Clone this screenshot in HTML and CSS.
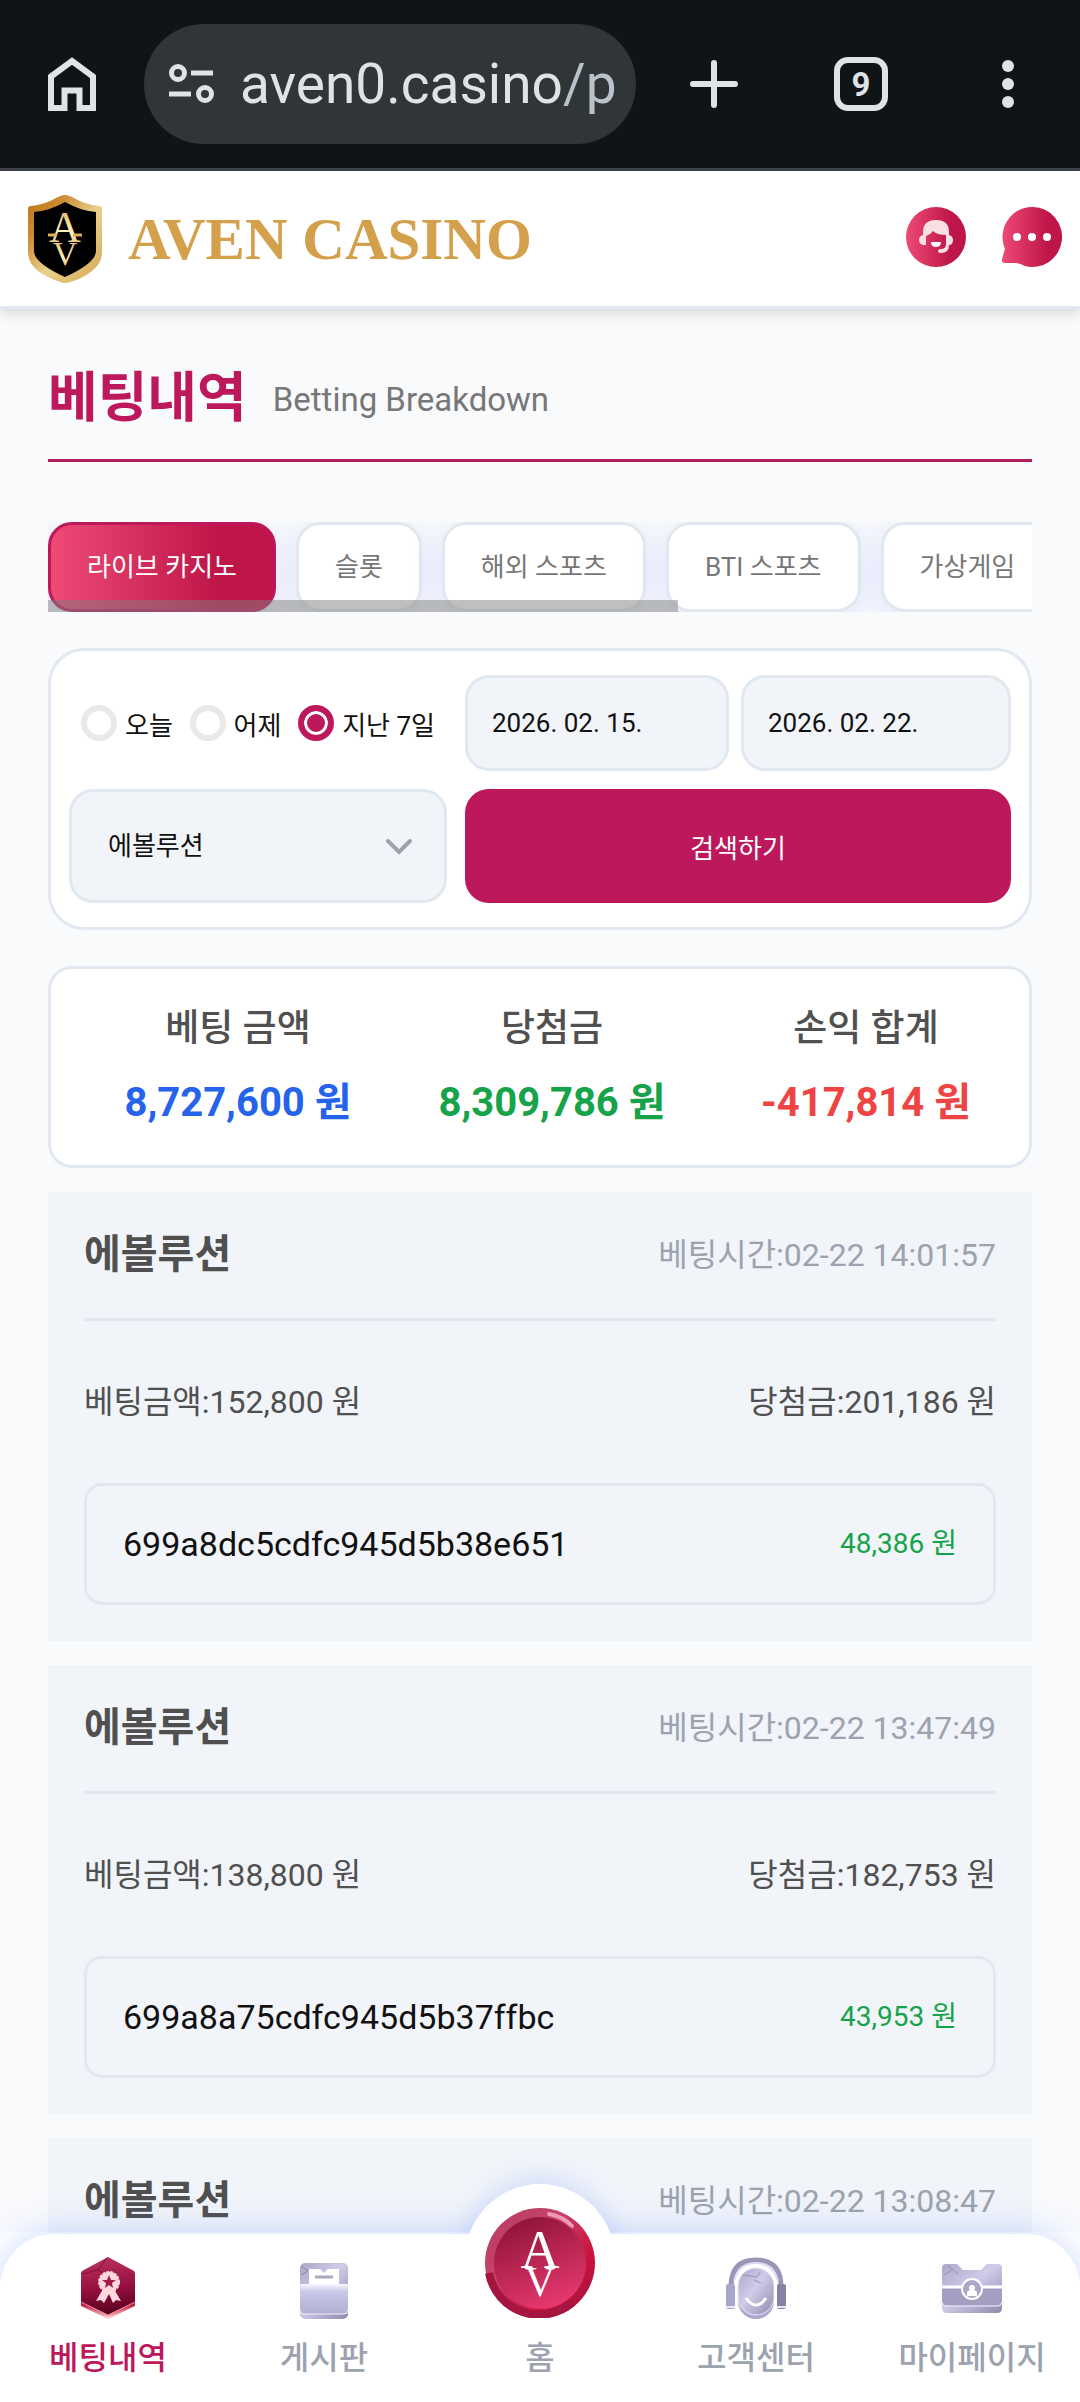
FILE: index.html
```html
<!DOCTYPE html>
<html lang="ko">
<head>
<meta charset="utf-8">
<meta name="viewport" content="width=device-width, initial-scale=1">
<title>베팅내역 - AVEN CASINO</title>
<link rel="stylesheet" href="styles.css">
</head>
<body>
<div class="app">
  <div class="browser">
    <button class="browser-btn" aria-label="Home">
      <svg width="48" height="54" viewBox="0 0 48 54"><path d="M3 19.500 24 4l21 15.500V51H31.500V33.500h-15V51H3z" fill="none" stroke="#dfe2e6" stroke-width="6"/></svg>
    </button>
    <div class="address">
      <svg width="48" height="42" viewBox="0 0 48 42" fill="none" stroke="#dfe2e6" stroke-width="5"><circle cx="10" cy="10" r="6.500"/><path d="M23 10h22M1 31h22"/><circle cx="37" cy="31" r="6.500"/></svg>
      <span class="url">aven0.casino<span class="url-path">/p</span></span>
    </div>
    <div class="browser-actions">
      <button class="browser-btn" aria-label="New tab">
        <svg width="48" height="48" viewBox="0 0 48 48"><path d="M24 3v42M3 24h42" stroke="#dfe2e6" stroke-width="6" stroke-linecap="round"/></svg>
      </button>
      <button class="browser-btn tab-count" aria-label="Tabs">9</button>
      <button class="browser-btn" aria-label="Menu">
        <svg width="48" height="54" viewBox="0 0 48 54" fill="#dfe2e6"><circle cx="24" cy="9" r="6"/><circle cx="24" cy="27" r="6"/><circle cx="24" cy="45" r="6"/></svg>
      </button>
    </div>
  </div>

  <header class="site-header">
    <a class="brand" href="#">
      <svg width="74" height="88" viewBox="0 0 74 88">
        <defs>
          <linearGradient id="gold" x1="0" y1="0" x2="1" y2="1"><stop offset="0" stop-color="#bd7316"/><stop offset=".25" stop-color="#cc8b31"/><stop offset=".55" stop-color="#ead08c"/><stop offset="1" stop-color="#d5a650"/></linearGradient>
          <linearGradient id="goldText" x1="0" y1="0" x2="0" y2="1"><stop offset="0" stop-color="#d9a553"/><stop offset=".6" stop-color="#fff3bf"/><stop offset="1" stop-color="#d5a550"/></linearGradient>
        </defs>
        <path d="M37 0q3 0 7 2 14 8 27 9 3 0 3 3v43q0 11-10 19-10 8-22 11-5 2-10 0Q20 83 10 76 0 68 0 57V14q0-3 3-3 13-1 27-9 4-2 7-2z" fill="url(#gold)"/>
        <path d="M37 7q16 9 31 10v39q0 12-31 26Q6 68 6 56V17q15-1 31-10z" fill="#000"/>
        <g class="emblem" fill="url(#goldText)"><text class="emblem-a" x="37" y="47">A</text><text class="emblem-v" x="37" y="70">V</text></g>
        <path d="M20 40h9M45 40h9" stroke="#dcae5f" stroke-width="3"/>
      </svg>
      <span class="brand-name">AVEN CASINO</span>
    </a>
    <div class="header-actions">
      <button class="round-btn" aria-label="상담원">
        <svg width="60" height="60" viewBox="0 0 60 60">
          <defs><linearGradient id="rose"><stop offset="0" stop-color="#ee4a76"/><stop offset=".75" stop-color="#be1648"/></linearGradient></defs>
          <circle cx="30" cy="30" r="30" fill="url(#rose)"/>
          <path d="M17 28V25q0-12 13-12t13 12v3q4 1 4 5 0 5-4 5 0 8-8 8-3 0-3-2t3-2q5 0 5-5V28q-9 0-13-4-3 4-7 5v9h-3q-4-1-4-5t4-5z" fill="#f7dfe4"/>
          <path d="M25 35h10q0 5-5 5t-5-5z" fill="#fff"/>
        </svg>
      </button>
      <button class="round-btn" aria-label="채팅">
        <svg width="60" height="60" viewBox="0 0 60 60">
          <path d="M31 0a29.500 30 0 1 1-8 59q-5-3-10-3H3q-4 0-3-4l3-10A29.500 30 0 0 1 31 0z" fill="url(#rose)"/>
          <g fill="#fff"><circle cx="15" cy="30" r="4"/><circle cx="30" cy="30" r="4"/><circle cx="45" cy="30" r="4"/></g>
        </svg>
      </button>
    </div>
  </header>

  <main class="content">
    <div class="page-title">
      <h1>베팅내역</h1>
      <span class="page-subtitle">Betting Breakdown</span>
    </div>

    <div class="tabs-wrap">
      <nav class="tabs">
        <button class="tab active">라이브 카지노</button>
        <button class="tab">슬롯</button>
        <button class="tab">해외 스포츠</button>
        <button class="tab">BTI 스포츠</button>
        <button class="tab">가상게임</button>
      </nav>
    </div>

    <form class="filter">
      <div class="periods">
        <label class="period"><input type="radio" name="period">오늘</label>
        <label class="period"><input type="radio" name="period">어제</label>
        <label class="period"><input type="radio" name="period" checked>지난 7일</label>
      </div>
      <div class="dates">
        <input class="field" type="text" value="2026. 02. 15." aria-label="시작일">
        <input class="field" type="text" value="2026. 02. 22." aria-label="종료일">
      </div>
      <div class="select-wrap">
        <select class="field" aria-label="게임사"><option>에볼루션</option></select>
        <svg class="chevron" width="28" height="18" viewBox="0 0 28 18"><path d="M3 3l11 11L25 3" fill="none" stroke="#9ca3af" stroke-width="4" stroke-linecap="round"/></svg>
      </div>
      <button class="search" type="button">검색하기</button>
    </form>

    <section class="summary">
      <div><p class="summary-label">베팅 금액</p><p class="summary-value blue">8,727,600 원</p></div>
      <div><p class="summary-label">당첨금</p><p class="summary-value green">8,309,786 원</p></div>
      <div><p class="summary-label">손익 합계</p><p class="summary-value red">-417,814 원</p></div>
    </section>

    <section class="bets">
      <article class="bet">
        <div class="bet-head"><h2>에볼루션</h2><time>베팅시간:02-22 14:01:57</time></div>
        <div class="bet-amounts"><span>베팅금액:152,800 원</span><span>당첨금:201,186 원</span></div>
        <div class="bet-result"><span>699a8dc5cdfc945d5b38e651</span><span class="profit">48,386 원</span></div>
      </article>
      <article class="bet">
        <div class="bet-head"><h2>에볼루션</h2><time>베팅시간:02-22 13:47:49</time></div>
        <div class="bet-amounts"><span>베팅금액:138,800 원</span><span>당첨금:182,753 원</span></div>
        <div class="bet-result"><span>699a8a75cdfc945d5b37ffbc</span><span class="profit">43,953 원</span></div>
      </article>
      <article class="bet">
        <div class="bet-head"><h2>에볼루션</h2><time>베팅시간:02-22 13:08:47</time></div>
      </article>
    </section>
  </main>

  <footer class="dock">
    <nav class="dock-nav">
      <a class="dock-item active" href="#">
        <svg width="54" height="62" viewBox="0 0 54 62">
          <defs>
            <linearGradient id="hex" x1=".3" y1="0" x2=".4" y2="1"><stop offset="0" stop-color="#b83262"/><stop offset=".5" stop-color="#9a1241"/><stop offset="1" stop-color="#58001f"/></linearGradient>
            <linearGradient id="hexEdge" x1="0" y1="0" x2="0" y2="1"><stop offset=".75" stop-color="#c01c3c"/><stop offset="1" stop-color="#ffdcdc"/></linearGradient>
          </defs>
          <path d="M27 3 54 18v31L27 62 0 49V18z" fill="url(#hexEdge)"/>
          <path d="M27 0 53 14q1 1 1 3v28L27 58 0 45V17q0-2 1-3z" fill="url(#hex)"/>
          <path d="M0 45 27 58 54 45" fill="none" stroke="#ea8b9b"/>
          <path d="M1 17l16-4 9-12M17 13l9 5" stroke="#851039" fill="none"/>
          <path d="M22 32 15 44l5-1 3 3 5-9 4 9 3-3 5 1-7-12z" fill="#ffd7df"/>
          <circle cx="28" cy="25" r="10" fill="#ffd7df" stroke="#ffd7df" stroke-width="2" stroke-dasharray="3 1"/>
          <path d="m28 18 2 5h5l-4 3 1 5-4-3-4 3 1-5-4-3h5z" fill="#a51a46"/>
        </svg>
        <span>베팅내역</span>
      </a>
      <a class="dock-item" href="#">
        <svg width="50" height="62" viewBox="0 0 50 62">
          <defs><linearGradient id="lav" x1="0" y1="0" x2="1" y2="1"><stop offset="0" stop-color="#aaa7c8"/><stop offset=".45" stop-color="#cfcce9"/><stop offset="1" stop-color="#8e89ac"/></linearGradient>
          <linearGradient id="lavDown" x1="0" y1="0" x2="0" y2="1"><stop offset="0" stop-color="#f7f7ff"/><stop offset=".25" stop-color="#cbc9e8"/><stop offset="1" stop-color="#b0aed2"/></linearGradient></defs>
          <rect x="1" y="6" width="48" height="56" rx="5" fill="url(#lav)"/>
          <path d="M10 28V12h11l4 4 4-4h11v16z" fill="#fff"/>
          <path d="M16 20h18" stroke="#aaa6c4" stroke-width="3"/>
          <path d="M1 27h48v26q0 4-4 4H5q-4 0-4-4z" fill="url(#lavDown)"/>
          <path d="M1 53q0 4 4 4h40q4 0 4-4" fill="none" stroke="#f3f1ff"/>
          <path d="M2 9l7 5-7 4" fill="none" stroke="#8986a8"/>
        </svg>
        <span>게시판</span>
      </a>
      <a class="dock-item home" href="#">
        <span class="coin">
          <svg width="110" height="110" viewBox="0 0 110 110">
            <defs>
              <linearGradient id="rim" x1="0" y1="0" x2="1" y2="1"><stop offset="0" stop-color="#b83a61"/><stop offset=".35" stop-color="#c44369"/><stop offset=".7" stop-color="#cc123f"/><stop offset="1" stop-color="#91143b"/></linearGradient>
              <linearGradient id="disc" x1=".3" y1="0" x2=".7" y2="1"><stop offset="0" stop-color="#8e1439"/><stop offset=".5" stop-color="#bd2754"/><stop offset="1" stop-color="#e83a72"/></linearGradient>
            </defs>
            <circle cx="55" cy="55" r="55" fill="url(#rim)"/>
            <path d="M4 65A51 51 0 0 0 88 94" fill="none" stroke="#a5153f" stroke-width="8"/>
            <circle cx="55" cy="55" r="46" fill="url(#disc)"/>
            <path d="M64 6q15 3 23 12" fill="none" stroke="#ed9ab2" stroke-width="4" stroke-linecap="round"/>
            <g class="coin-mark" fill="#fff"><text class="coin-a" x="55" y="60">A</text><text class="coin-v" x="55" y="88">V</text></g>
          </svg>
        </span>
        <span>홈</span>
      </a>
      <a class="dock-item" href="#">
        <svg width="60" height="62" viewBox="0 0 60 62">
          <path d="M5 30q0-27 25-27t25 27" fill="none" stroke="#9a96b8" stroke-width="5"/>
          <path d="M8 24Q13 6 30 6t22 18" fill="none" stroke="#dddaf2" stroke-width="2"/>
          <rect x="0" y="27" width="9" height="25" rx="2" fill="#a9a6cc"/><rect x="51" y="27" width="9" height="25" rx="2" fill="#8781a5"/>
          <path d="M0 50h9M51 50h9" stroke="#eae8f8" stroke-width="2"/>
          <rect x="12" y="15" width="36" height="47" rx="18" fill="#aaa6cc"/>
          <rect x="12" y="11" width="36" height="47" rx="18" fill="url(#lav)" stroke="#ebe9fa"/>
          <path d="M20 41q10 14 20 0" fill="none" stroke="#fff" stroke-width="3"/>
          <path d="M17 18l14 2 3-5M28 23l7 3" fill="none" stroke="#9692b4"/>
        </svg>
        <span>고객센터</span>
      </a>
      <a class="dock-item" href="#">
        <svg width="60" height="62" viewBox="0 0 60 62">
          <path d="M4 7h11l6 6h18l6-6h11q4 0 4 4v40q0 5-5 5H5q-5 0-5-5V11q0-4 4-4z" fill="url(#lav)"/>
          <path d="M0 30h60v15q0 4-4 4H4q-4 0-4-4z" fill="#a39fc2"/>
          <path d="M0 30h60" stroke="#fff" stroke-width="3"/>
          <path d="M0 45q0 4 4 4h52q4 0 4-4" fill="none" stroke="#f4f2ff"/>
          <circle cx="30" cy="32" r="10" fill="#aaa7ca" stroke="#fff" stroke-width="2"/>
          <circle cx="30" cy="31" r="3" fill="#fff"/><path d="M25 39v-3q0-3 5-3t5 3v3z" fill="#fff"/>
          <path d="M2 18l9-6M6 9l10 8" stroke="#918db0"/>
        </svg>
        <span>마이페이지</span>
      </a>
    </nav>
  </footer>
</div>
</body>
</html>
```
FILE: styles.css
```css
* { box-sizing: border-box; }

body {
  margin: 0;
  background: #f9fafc;
  color: #111;
  font-family: Roboto, "Noto Sans CJK KR", sans-serif;
}

h1, h2, p { margin: 0; }

a { color: inherit; text-decoration: none; }

button, input, select { font: inherit; color: inherit; }

button {
  padding: 0;
  border: 0;
  background: none;
}

svg { display: block; flex-shrink: 0; }

.app {
  display: flex;
  flex-direction: column;
  height: 100vh;
}

/* Browser toolbar */
.browser {
  display: flex;
  align-items: center;
  flex-shrink: 0;
  gap: 48px;
  padding: 24px 48px;
  background: #0f1417;
  border-bottom: 3px solid #40454a;
}

.browser-btn {
  display: flex;
  align-items: center;
  justify-content: center;
}

.address {
  display: flex;
  align-items: center;
  gap: 24px;
  flex: 1;
  height: 120px;
  padding-left: 24px;
  border-radius: 60px;
  background: #303538;
  white-space: nowrap;
}

.url { color: #dfe2e6; font-size: 55px; line-height: 64px; }
.url-path { color: #bcc2cc; }

.browser-actions {
  display: flex;
  align-items: center;
  justify-content: space-between;
  width: 348px;
  padding-left: 6px;
}

.tab-count {
  width: 54px;
  height: 54px;
  border: 6px solid #dfe2e6;
  border-radius: 14px;
  color: #dfe2e6;
  font-size: 33px;
  font-weight: 700;
}

/* Site header */
.site-header {
  display: flex;
  align-items: center;
  justify-content: space-between;
  flex-shrink: 0;
  height: 138px;
  padding: 0 18px 0 28px;
  background: #fff;
  border-bottom: 3px solid #e2e8f0;
  box-shadow: 0 4px 12px rgba(0, 0, 0, .15);
  position: relative;
  z-index: 1;
}

.brand { display: flex; align-items: center; gap: 26px; }

.brand-name {
  color: #d5a04c;
  font-family: "Liberation Serif", serif;
  font-size: 59px;
  font-weight: 700;
  line-height: 64px;
}

.emblem {
  font-family: "Liberation Serif", serif;
  text-anchor: middle;
}

.emblem-a { font-size: 44px; }
.emblem-v { font-size: 34px; }

.header-actions { display: flex; gap: 36px; padding-bottom: 3px; }

/* Page */
.content {
  flex: 1;
  min-height: 0;
  overflow: hidden;
  padding: 48px 48px 0;
}

.page-title {
  display: flex;
  align-items: center;
  gap: 26px;
  padding-bottom: 18px;
  border-bottom: 3px solid #b31b5b;
}

.page-title h1 {
  color: #bc185b;
  font-size: 54px;
  font-weight: 700;
  line-height: 84px;
}

.page-subtitle { color: #777; font-size: 33px; }

.tabs-wrap { position: relative; margin-top: 60px; }

.tabs-wrap::after {
  content: "";
  position: absolute;
  left: 0;
  bottom: 0;
  width: 64%;
  height: 12px;
  background: rgba(128, 128, 128, .5);
}

.tabs {
  display: flex;
  gap: 20px;
  overflow: hidden;
}

.tab {
  flex-shrink: 0;
  padding: 24px 36px;
  border: 3px solid #e2e8f0;
  border-radius: 24px;
  background: #fff;
  box-shadow: 0 6px 30px rgba(100, 130, 255, .18);
  color: #777;
  font-size: 26px;
  line-height: 36px;
}

.tab.active {
  border-color: #bc185b;
  background: linear-gradient(90deg, #ee4a76, #be1648 75%);
  color: #fff;
}

/* Filter */
.filter {
  display: grid;
  grid-template-columns: 9fr 13fr;
  gap: 18px;
  margin-top: 36px;
  padding: 24px 18px;
  border: 3px solid #e2e8f0;
  border-radius: 36px;
  background: #fff;
  font-size: 26px;
}

.periods {
  display: flex;
  align-items: center;
  justify-content: space-between;
  padding: 0 12px;
  white-space: nowrap;
}

.period { display: flex; align-items: center; gap: 8px; }

.period input {
  appearance: none;
  width: 36px;
  height: 36px;
  margin: 0;
  border: 6px solid #e9e9e9;
  border-radius: 50%;
  background: #fff;
}

.period input:checked {
  border-color: #bc185b;
  background: #bc185b;
  box-shadow: inset 0 0 0 3px #fff;
}

.dates { display: grid; grid-template-columns: 44fr 45fr; gap: 12px; }

.field {
  width: 100%;
  min-width: 0;
  height: 96px;
  padding: 0 24px;
  border: 3px solid #e2e8f0;
  border-radius: 24px;
  background: #f1f4f9;
}

.select-wrap { position: relative; }

.select-wrap .field {
  appearance: none;
  height: 114px;
  padding: 0 36px;
}

.chevron {
  position: absolute;
  right: 34px;
  top: 50%;
  margin-top: -8px;
  pointer-events: none;
}

.search {
  border-radius: 24px;
  background: #bc185b;
  color: #fff;
}

/* Totals */
.summary {
  display: grid;
  grid-template-columns: repeat(3, 1fr);
  margin: 36px 0 24px;
  padding: 32px 6px 32px 30px;
  border: 3px solid #e2e8f0;
  border-radius: 24px;
  background: #fff;
  text-align: center;
}

.summary-label {
  margin-bottom: 16px;
  color: #505050;
  font-size: 37px;
  font-weight: 500;
  line-height: 56px;
}

.summary-value { font-size: 40px; font-weight: 700; line-height: 60px; }

.blue { color: #2563eb; }
.green { color: #16a34a; }
.red { color: #ef4444; }

/* Bets */
.bets { display: flex; flex-direction: column; gap: 24px; }

.bet {
  padding: 36px;
  background: #f1f4f9;
  color: #505050;
  font-size: 32px;
  line-height: 54px;
}

.bet-head {
  display: flex;
  align-items: center;
  justify-content: space-between;
  padding-bottom: 36px;
  border-bottom: 3px solid #e2e8f0;
}

.bet-head h2 { font-size: 40px; font-weight: 700; }
.bet-head time { color: #9ca3af; }

.bet-amounts {
  display: flex;
  justify-content: space-between;
  padding: 54px 0;
}

.bet-result {
  display: flex;
  align-items: center;
  justify-content: space-between;
  padding: 36px;
  border: 3px solid #e2e8f0;
  border-radius: 18px;
  color: #111;
  font-size: 34px;
  line-height: 44px;
}

.profit { color: #16a34a; font-size: 28px; }

/* Bottom navigation */
.dock {
  flex-shrink: 0;
  position: relative;
  z-index: 1;
  padding-top: 2px;
  background: #fff;
}

.dock-nav {
  display: grid;
  grid-template-columns: repeat(5, 1fr);
  padding: 23px 0 20px;
  border-radius: 54px 54px 0 0;
  background: #fff;
  box-shadow: 0 0 36px rgba(80, 130, 255, .3);
}

.dock-item {
  display: flex;
  flex-direction: column;
  align-items: center;
  gap: 15px;
  color: #9ca3af;
  font-size: 32px;
  font-weight: 500;
  line-height: 48px;
}

.dock-item.active { color: #bc185b; }

.home { position: relative; padding-top: 77px; }

/* Raised home coin that stands above the bar */
.coin {
  position: absolute;
  top: -73px;
  display: flex;
  align-items: center;
  justify-content: center;
  width: 150px;
  height: 150px;
  padding-top: 8px;
  border-radius: 50%;
  background: #fff;
}

.coin::before {
  content: "";
  position: absolute;
  inset: 0 0 50%;
  border-radius: 75px 75px 0 0;
  box-shadow: 0 -6px 24px rgba(80, 130, 255, .2);
  clip-path: inset(-60px -60px 25px);
}

.coin-mark {
  font-family: "Liberation Serif", serif;
  text-anchor: middle;
}

.coin-a { font-size: 54px; }
.coin-v { font-size: 42px; }
```
